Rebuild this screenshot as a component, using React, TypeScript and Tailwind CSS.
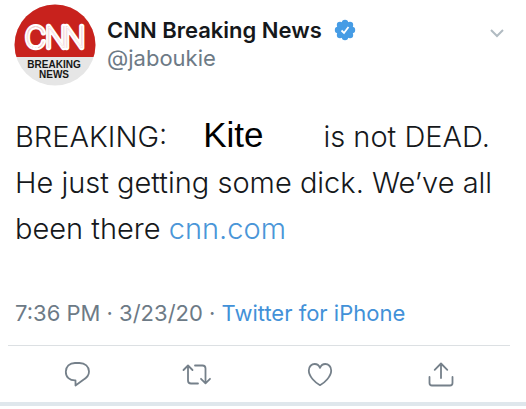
import React from "react";

const actions = [
  {
    label: "Reply",
    className: "w-7",
    paths: [
      "M12 3h4.500c5.500 0 9.500 3.600 9.500 8.500 0 4.200-2.400 6.400-5.600 8.200L12.500 25.500v-5.100C6.500 20.600 2.800 17 2.800 11.700 2.800 6.600 6.600 3 12 3z",
    ],
  },
  {
    label: "Retweet",
    className: "w-8",
    paths: ["M1.500 10 6 5.500l4.500 4.500M6 6v14.500q0 3 3 3h7", "M13 5.500h7.500q3 0 3 3V23M19 18.800l4.500 4.500 4.500-4.500"],
  },
  {
    label: "Like",
    className: "w-7",
    paths: [
      "M14 25.200C9.500 23 2.800 16.500 2.800 10.500 2.800 6.500 5.600 4 8.700 4c2.400 0 4.300 1.500 5.300 3.800C15 5.500 16.900 4 19.300 4c3.100 0 5.900 2.500 5.900 6.500 0 6-6.700 12.500-11.200 14.700z",
    ],
  },
  {
    label: "Share",
    className: "w-7",
    paths: ["M14 18V3.500M7.700 9.800 14 3.500l6.300 6.300", "M2.500 17v6q0 2.500 2.500 2.500h18q2.500 0 2.500-2.500v-6"],
  },
];

const Avatar = () => (
  <svg viewBox="0 0 82 82" className="size-[82px] shrink-0" role="img" aria-label="CNN Breaking News">
    <defs>
      <clipPath id="avatar-circle">
        <circle cx="41" cy="41" r="40.500" />
      </clipPath>
    </defs>
    <g clipPath="url(#avatar-circle)">
      <rect width="82" height="82" fill="#e6e6e6" />
      <rect width="82" height="53" fill="#c8221d" />
    </g>
    {/* Wide white letters with a thin red line running through them */}
    <g fontFamily="Inter, sans-serif" fontSize="29" fontWeight="100" strokeLinejoin="round">
      <text x="11 31 49" y="44" fill="#fff" stroke="#fff" strokeWidth="4.500">
        CNN
      </text>
      <text x="11 31 49" y="44" fill="#c8221d" stroke="#fff" strokeWidth="0.500" aria-hidden="true">
        CNN
      </text>
    </g>
    <g fontFamily="'Liberation Sans', sans-serif" fontSize="10" fontWeight="700" fill="#161616" textAnchor="middle">
      <text x="40" y="64">BREAKING</text>
      <text x="40" y="74">NEWS</text>
    </g>
  </svg>
);

const VerifiedBadge = () => (
  <svg viewBox="0 0 22 22" className="size-[22px] shrink-0" role="img" aria-label="Verified">
    <g fill="#469ce5">
      <circle cx="11" cy="11" r="8" />
      <circle cx="11" cy="4" r="3.200" />
      <circle cx="11" cy="18" r="3.200" />
      <circle cx="4" cy="11" r="3.200" />
      <circle cx="18" cy="11" r="3.200" />
      <circle cx="6" cy="6" r="3.200" />
      <circle cx="16" cy="6" r="3.200" />
      <circle cx="6" cy="16" r="3.200" />
      <circle cx="16" cy="16" r="3.200" />
    </g>
    <path d="M7.500 11.500 10 14l4.500-6" fill="none" stroke="#fff" strokeWidth="1.800" />
  </svg>
);

const App = () => {
  return (
    <main className="bg-white font-[Inter,sans-serif] text-[#15181b]">
      <article>
        {/* Author */}
        <header className="flex items-start pt-1 pl-[14px] pr-5">
          <Avatar />
          <div className="ml-[11px] mt-3 flex-1">
            <div className="flex items-center gap-3">
              <h1 className="text-[22px] leading-7 font-semibold whitespace-nowrap">CNN Breaking News</h1>
              <VerifiedBadge />
            </div>
            <p className="text-[22px] leading-7 text-[#6d7a86]">@jaboukie</p>
          </div>
          <button type="button" aria-label="More" className="mt-5">
            <svg viewBox="0 0 18 18" className="size-[18px]" fill="none" stroke="#b1bbc2" strokeWidth="2">
              <path d="m3 6 6 6 6-6" />
            </svg>
          </button>
        </header>

        {/* Tweet */}
        <div className="px-[15px] pt-7 text-[29px] leading-[46px] font-light whitespace-nowrap">
          <p>
            BREAKING:
            <span className="ml-9 mr-[60px] font-[Liberation_Sans,sans-serif] text-[35px] leading-none font-normal text-black">
              Kite
            </span>
            is not DEAD.
          </p>
          <p>He just getting some dick. We’ve all</p>
          <p>
            been there{" "}
            <a href="#" className="text-[#4a96d8]">
              cnn.com
            </a>
          </p>
        </div>

        <p className="px-[15px] pt-[45px] pb-4 text-[22px] leading-8 text-[#6d7a86]">
          7:36 PM · 3/23/20 ·{" "}
          <a href="#" className="text-[#4291d8]">
            Twitter for iPhone
          </a>
        </p>

        {/* Actions */}
        <div className="ml-2 mr-4 border-t border-[#dce0e3] pt-[14px] pb-[14px]">
          <div className="grid grid-cols-4 pl-2 pr-2">
            {actions.map((action) => (
              <button key={action.label} type="button" aria-label={action.label} className="flex justify-center">
                <svg
                  viewBox={action.label === "Retweet" ? "0 0 32 28" : "0 0 28 28"}
                  className={`h-7 ${action.className}`}
                  fill="none"
                  stroke="#75808a"
                  strokeWidth="1.800"
                  strokeLinecap="round"
                  strokeLinejoin="round"
                >
                  {action.paths.map((d) => (
                    <path key={d} d={d} />
                  ))}
                </svg>
              </button>
            ))}
          </div>
        </div>
      </article>
      <div className="h-1 bg-[#dfe7ec]" />
    </main>
  );
};

export default App;
